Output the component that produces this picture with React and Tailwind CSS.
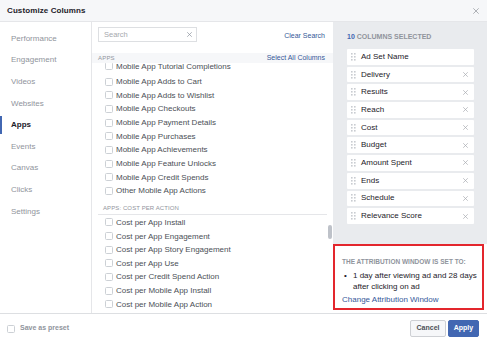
import React from "react";

const navItems = ["Performance", "Engagement", "Videos", "Websites", "Apps", "Events", "Canvas", "Clicks", "Settings"];
const appItems = [
  "Mobile App Tutorial Completions",
  "Mobile App Adds to Cart",
  "Mobile App Adds to Wishlist",
  "Mobile App Checkouts",
  "Mobile App Payment Details",
  "Mobile App Purchases",
  "Mobile App Achievements",
  "Mobile App Feature Unlocks",
  "Mobile App Credit Spends",
  "Other Mobile App Actions",
];
const costItems = [
  "Cost per App Install",
  "Cost per App Engagement",
  "Cost per App Story Engagement",
  "Cost per App Use",
  "Cost per Credit Spend Action",
  "Cost per Mobile App Install",
  "Cost per Mobile App Action",
];
const selected = ["Ad Set Name", "Delivery", "Results", "Reach", "Cost", "Budget", "Amount Spent", "Ends", "Schedule", "Relevance Score"];

function X({ className = "", size = 6 }) {
  return (
    <svg width={size} height={size} viewBox="0 0 10 10" className={className}>
      <path d="M1 1 L9 9 M9 1 L1 9" stroke="currentColor" strokeWidth="1.4" strokeLinecap="round" />
    </svg>
  );
}

function Handle() {
  return (
    <svg width="5" height="8" viewBox="0 0 5 8" className="shrink-0">
      {[0, 1].map((c) =>
        [0, 1, 2].map((r) => (
          <rect key={`${c}${r}`} x={c * 3} y={r * 3} width="1.6" height="1.6" fill="#c9ccd1" />
        ))
      )}
    </svg>
  );
}

function Check() {
  return <span className="w-[8px] h-[8px] shrink-0 rounded-[1.5px] border border-[#ccd0d5] bg-white" />;
}

function Row({ label, first }) {
  return (
    <div className={"h-[13.65px] flex gap-[3px] " + (first ? "items-start pt-[1px]" : "items-center")}>
      <Check />
      <span className="text-[8px] leading-[9px] text-[#4b4f56] whitespace-nowrap">{label}</span>
    </div>
  );
}

export default function App() {
  return (
    <div
      className="w-[487px] h-[350px] flex flex-col bg-white overflow-hidden"
      style={{ fontFamily: '"Liberation Sans", Arial, sans-serif' }}
    >
      {/* Header */}
      <div className="h-[22px] shrink-0 bg-[#f6f7f9] border-b border-[#e5e6e9] flex items-center justify-between pl-[7px] pr-[8px]">
        <span className="text-[8px] font-bold text-[#1d2129] tracking-[0.1px]">Customize Columns</span>
        <X className="text-[#a0a3a9]" size={6} />
      </div>

      {/* Body */}
      <div className="flex-1 flex min-h-0">
        {/* Nav */}
        <div className="w-[92px] shrink-0 border-r border-[#e5e6e9] pt-[6px]">
          {navItems.map((n) => (
            <div key={n} className="h-[21.6px] flex items-center relative">
              {n === "Apps" && <span className="absolute left-0 top-[1.8px] w-[2px] h-[18px] bg-[#4267b2]" />}
              <span
                className={
                  "pl-[11px] text-[8px] " +
                  (n === "Apps" ? "font-bold text-[#1d2129]" : "text-[#90949c]")
                }
              >
                {n}
              </span>
            </div>
          ))}
        </div>

        {/* Middle */}
        <div className="flex-1 flex flex-col min-w-0">
          <div className="flex items-start justify-between pl-[6px] pr-[8px] pt-[5px]">
            <div className="w-[99px] h-[15px] border border-[#dddfe2] flex items-center justify-between pl-[5px] pr-[4px]">
              <span className="text-[7.5px] text-[#a6a9ae]">Search</span>
              <X className="text-[#8d949e]" size={5} />
            </div>
            <span className="text-[7px] text-[#365899] mt-[4px]">Clear Search</span>
          </div>
          <div className="mt-[11px] h-[10px] bg-[#f6f7f9] flex items-center justify-between pl-[6px] pr-[8px] relative z-10">
            <span className="text-[6px] text-[#90949c] tracking-[0.2px]">APPS</span>
            <span className="text-[7px] text-[#365899]">Select All Columns</span>
          </div>
          <div className="flex-1 relative overflow-hidden">
            <div className="mt-[-1.8px] pl-[13px]">
              {appItems.map((a, i) => (
                <Row key={a} label={a} first={i === 0} />
              ))}
            </div>
            <div className="ml-[6px] mr-[6px] pt-[6px] pb-[2px] border-b border-[#e5e6e9] pl-[5px]">
              <div className="text-[6px] leading-[8px] text-[#90949c] tracking-[0.1px]">APPS: COST PER ACTION</div>
            </div>
            <div className="mt-[1px] pl-[13px]">
              {costItems.map((a) => (
                <Row key={a} label={a} />
              ))}
            </div>
            <span className="absolute right-[1px] top-[162px] w-[4px] h-[14px] rounded-[2px] bg-[#bec2c9]" />
          </div>
        </div>

        {/* Right */}
        <div className="w-[154px] shrink-0 flex flex-col bg-white">
          <div className="flex-1 bg-[#e9ebee] pl-[14px] pr-[13px] pt-[11px]">
            <div className="h-[8px] leading-[8px] text-[7px] font-bold text-[#90949c] mb-[8px]">
              <span className="text-[#4267b2]">10</span> COLUMNS SELECTED
            </div>
            <div className="flex flex-col gap-[2px]">
              {selected.map((s, i) => (
                <div key={s} className="h-[15.7px] bg-white rounded-[1px] flex items-center pl-[4px] pr-[6px]">
                  <Handle />
                  <span className="ml-[5px] text-[8px] text-[#1d2129] flex-1">{s}</span>
                  {i > 0 && <X className="text-[#a8abb0]" size={5} />}
                </div>
              ))}
            </div>
          </div>
          <div className="h-[66px] shrink-0 mr-[3px] mb-[3px] border-2 border-[#e3262d] bg-white pl-[7px] pt-[12px]">
            <div className="text-[6.5px] leading-[8px] font-bold text-[#90949c] whitespace-nowrap">
              THE ATTRIBUTION WINDOW IS SET TO:
            </div>
            <div className="mt-[3.5px] flex text-[8px] leading-[11px] text-[#1d2129]">
              <span className="w-[11px] shrink-0 pl-[2px]">•</span>
              <span>1 day after viewing ad and 28 days after clicking on ad</span>
            </div>
            <div className="mt-[3px] text-[8px] leading-[10px] text-[#365899] whitespace-nowrap">Change Attribution Window</div>
          </div>
        </div>
      </div>

      {/* Footer */}
      <div className="h-[37px] shrink-0 border-t border-[#dddfe2] pt-[6px] pl-[7px] pr-[8px]">
        <div className="h-[17px] flex items-center justify-between">
          <div className="flex items-center gap-[5px]">
            <span className="w-[8px] h-[8px] rounded-[1.5px] border border-[#ccd0d5] bg-white" />
            <span className="text-[7px] font-bold text-[#90949c]">Save as preset</span>
          </div>
          <div className="flex items-center gap-[2px]">
            <button className="w-[36px] h-[17px] rounded-[2px] border border-[#ced0d4] bg-[#f6f7f9] text-[7px] font-bold text-[#4b4f56] flex items-center justify-center">
              Cancel
            </button>
            <button className="w-[31px] h-[17px] rounded-[2px] border border-[#4267b2] bg-[#4267b2] text-[7px] font-bold text-white flex items-center justify-center">
              Apply
            </button>
          </div>
        </div>
      </div>
    </div>
  );
}
